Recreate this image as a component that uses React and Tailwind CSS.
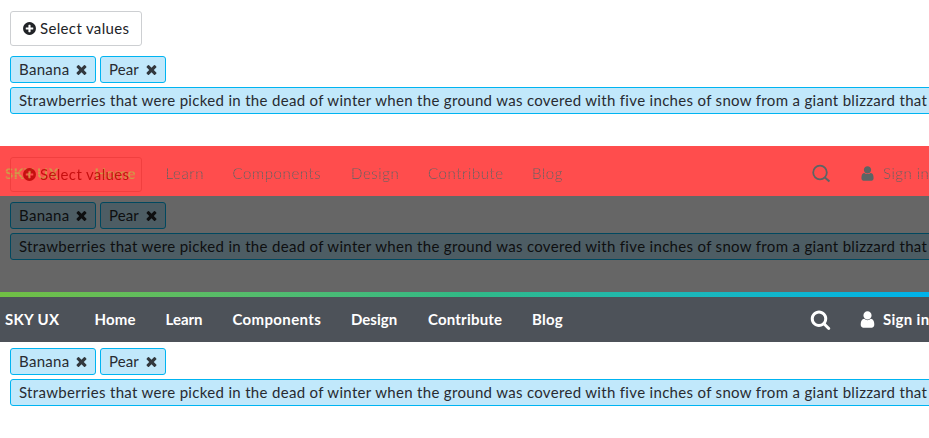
import React from 'react';

const paths = {
  times: 'M1490 1322q0 40-28 68l-136 136q-28 28-68 28t-68-28l-294-294-294 294q-28 28-68 28t-68-28l-136-136q-28-28-28-68t28-68l294-294-294-294q-28-28-28-68t28-68l136-136q28-28 68-28t68 28l294 294 294-294q28-28 68-28t68 28l136 136q28 28 28 68t-28 68l-294 294 294 294q28 28 28 68z',
  plus: 'M1344 960v-128q0-26-19-45t-45-19h-256v-256q0-26-19-45t-45-19h-128q-26 0-45 19t-19 45v256h-256q-26 0-45 19t-19 45v128q0 26 19 45t45 19h256v256q0 26 19 45t45 19h128q26 0 45-19t19-45v-256h256q26 0 45-19t19-45zm320-64q0 209-103 385.5t-279.5 279.5-385.5 103-385.5-103-279.5-279.5-103-385.5 103-385.5 279.5-279.5 385.5-103 385.5 103 279.5 279.5 103 385.5z',
  search: 'M1216 832q0-185-131.5-316.5t-316.5-131.5-316.5 131.5-131.5 316.5 131.5 316.5 316.5 131.5 316.5-131.5 131.5-316.5zm512 832q0 52-38 90t-90 38q-54 0-90-38l-343-342q-179 124-399 124-143 0-273.5-55.5t-225-150-150-225-55.5-273.5 55.5-273.5 150-225 225-150 273.5-55.5 273.5 55.5 225 150 150 225 55.5 273.5q0 220-124 399l343 343q37 37 37 90z',
  user: 'M1536 1399q0 109-62.5 187t-150.5 78h-854q-88 0-150.5-78t-62.5-187q0-85 8.5-160.5t31.5-152 58.5-131 94-89 134.5-34.5q131 128 313 128t313-128q76 0 134.5 34.5t94 89 58.5 131 31.5 152 8.5 160.5zm-256-887q0 159-112.5 271.5t-271.5 112.5-271.5-112.5-112.5-271.5 112.5-271.5 271.5-112.5 271.5 112.5 112.5 271.5z',
};

function Icon({ name, className }) {
  return (
    <svg viewBox="0 0 1792 1792" fill="currentColor" className={`shrink-0 overflow-visible ${className}`}>
      <path d={paths[name]} />
    </svg>
  );
}

function ThinSearch() {
  return (
    <svg viewBox="0 0 19 19" fill="none" stroke="currentColor" className="mr-[28px] ml-auto h-[19px] w-[19px] shrink-0">
      <circle cx="8" cy="8.5" r="6.8" strokeWidth="1.8" />
      <path d="M12.6 13.2l4.8 4.4" strokeWidth="2" />
    </svg>
  );
}

function SelectButton({ diff }) {
  return (
    <div
      className={`flex h-[35px] w-[132px] items-center rounded-[3px] border pl-[11px] ${
        diff ? 'border-[#ee3c3c] text-[#b90000]' : 'border-[#cdcfd2] bg-white text-[#212327]'
      }`}
    >
      <Icon name="plus" className="size-[15px]" />
      <span className="ml-[3px] pb-px tracking-[0.35px]">Select values</span>
    </div>
  );
}

function Token({ children, dim, className = '', closable = true }) {
  return (
    <div
      className={`flex h-[27px] shrink-0 items-center rounded-[3px] border pl-2 whitespace-nowrap ${
        dim ? 'border-[#00485f] bg-[#4d5d64] text-[#0e0f10]' : 'border-[#00b4f1] bg-[#c1e8fb] text-[#282b31]'
      } ${className}`}
    >
      <span className="pb-px">{children}</span>
      {closable && <Icon name="times" className={`mr-[6px] ml-auto size-[15px] ${dim ? '' : 'text-[#32383e]'}`} />}
    </div>
  );
}

function Tokens({ dim }) {
  return (
    <div className="flex flex-col gap-1 pl-[10px]">
      <div className="flex gap-1">
        <Token dim={dim} className="w-[86px] tracking-[0.3px]">Banana</Token>
        <Token dim={dim} className="w-[66px] tracking-[0.1px]">Pear</Token>
      </div>
      <Token dim={dim} closable={false} className="w-[1000px] tracking-[0.318px]">
        Strawberries that were picked in the dead of winter when the ground was covered with five inches of snow from a giant blizzard that
      </Token>
    </div>
  );
}

function NavItems({ ghost }) {
  const text = ghost
    ? 'pb-px mask-[repeating-linear-gradient(180deg,#000_0px,#000_2px,#0009_2px,#0009_3px)]'
    : 'pb-px';
  const mixed = ghost ? 'font-bold text-[#d09a48] tracking-[0.2px]' : '';
  const loose = ghost ? 'tracking-[0.6px]' : '';
  return (
    <>
      <span className={`w-[89.5px] ${text} ${mixed} ${ghost ? '' : 'tracking-[0.3px]'}`}>SKY UX</span>
      <span className={`w-[71px] ${text} ${mixed} ${ghost ? '' : 'tracking-[0.15px]'}`}>Home</span>
      <span className={`w-[67px] ${text} ${loose}`}>Learn</span>
      <span className={`w-[118.5px] ${text} ${ghost ? loose : 'tracking-[0.35px]'}`}>Components</span>
      <span className={`w-[77px] ${text} ${loose}`}>Design</span>
      <span className={`w-[104px] ${text} ${ghost ? loose : 'tracking-[0.2px]'}`}>Contribute</span>
      <span className={`${text} ${ghost ? loose : 'tracking-[0.2px]'}`}>Blog</span>
      {ghost ? <ThinSearch /> : <Icon name="search" className="mr-[27px] ml-auto size-[21px]" />}
      <Icon name="user" className={ghost ? 'mr-[7px] size-[17px]' : 'mr-[6px] size-[19px]'} />
      <span className={`w-[46px] whitespace-nowrap ${text} ${ghost ? 'tracking-[0.5px]' : 'tracking-[0.3px]'}`}>Sign in</span>
    </>
  );
}

export default function App() {
  return (
    <main className="h-[438px] w-[929px] overflow-hidden bg-white font-[Lato,sans-serif] text-[15px] leading-5">
      <section className="flex h-[146px] flex-col gap-[10px] pt-[11px]">
        <div className="pl-[10px]"><SelectButton /></div>
        <Tokens />
      </section>
      <section className="h-[146px] bg-[#666]">
        <div className="relative h-[50px] bg-[#ff4d4d] pt-[11px] pl-[10px]">
          <div className="absolute inset-0 flex items-center pt-[5px] pl-[5px] font-light text-[#5c6464]">
            <NavItems ghost />
          </div>
          <div className="relative opacity-80"><SelectButton diff /></div>
        </div>
        <div className="pt-[6px]"><Tokens dim /></div>
      </section>
      <section className="h-[146px]">
        <div className="h-[5px] bg-linear-to-r from-[#71bf44] via-[#31b986] to-[#00b2ec]" />
        <nav className="flex h-[45px] items-center bg-[#4d5259] pl-[5px] font-bold text-white"><NavItems /></nav>
        <div className="pt-[6px]"><Tokens /></div>
      </section>
    </main>
  );
}
